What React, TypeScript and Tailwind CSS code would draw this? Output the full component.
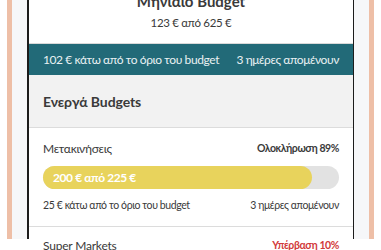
export default function App() {
  return (
    <div className="h-[250px] w-[381px] overflow-hidden bg-white font-['Lato','Noto_Sans',sans-serif] text-[#3a3a3a]">
      <div className="ml-[7px] h-full w-[367px] border-x-[5px] border-[#eebfa7] bg-[#f6f7f9] px-[15px]">
        <div className="h-full border-l-2 border-r border-[#1c1c1c] bg-white">
          {/* monthly summary */}
          <div className="-mt-[11px] flex flex-col items-center pb-[10px]">
            <h1 className="text-[15px] font-bold leading-6">Μηνιαίο Budget</h1>
            <p className="text-[11.5px] leading-5 tracking-[-0.3px]">123 € από 625 €</p>
          </div>
          <div className="flex h-[32px] items-center justify-between border-t border-[#d9d9d9] bg-[#226a78] px-[14px] text-[12px] tracking-[-0.4px] text-[#e9f1f3]">
            <span>102 € κάτω από το όριο του budget</span>
            <span>3 ημέρες απομένουν</span>
          </div>

          <div className="flex h-[53px] items-center border-b border-[#dcdcdc] bg-[#f2f2f2] px-[14px]">
            <h2 className="text-[14px] font-bold tracking-[-0.1px]">Ενεργά Budgets</h2>
          </div>

          {/* budget: transport */}
          <div className="border-b border-[#dcdcdc] px-[14px] pb-[12px] pt-[12px]">
            <div className="flex h-[18px] items-center justify-between">
              <span className="text-[12px] tracking-[-0.3px]">Μετακινήσεις</span>
              <span className="text-[10.5px] font-bold tracking-[-0.4px]">Ολοκλήρωση 89%</span>
            </div>
            <div className="mt-[8px] h-[23px] w-full rounded-full bg-[#e2e2e2]">
              <div className="flex h-full items-center rounded-full bg-[#e8d35c] px-[10px]" style={{ width: "91%" }}>
                <span className="text-[12px] font-bold tracking-[-0.4px] text-white">200 € από 225 €</span>
              </div>
            </div>
            <div className="mt-[9px] flex h-[16px] items-center justify-between text-[10.5px] tracking-[-0.4px]">
              <span>25 € κάτω από το όριο του budget</span>
              <span>3 ημέρες απομένουν</span>
            </div>
          </div>

          {/* budget: super markets */}
          <div className="px-[14px] pt-[10px]">
            <div className="flex h-[18px] items-center justify-between">
              <span className="text-[12px] tracking-[-0.2px]">Super Markets</span>
              <span className="text-[10.5px] font-bold tracking-[-0.4px] text-[#d23a3a]">Υπέρβαση 10%</span>
            </div>
          </div>
        </div>
      </div>
    </div>
  );
}
